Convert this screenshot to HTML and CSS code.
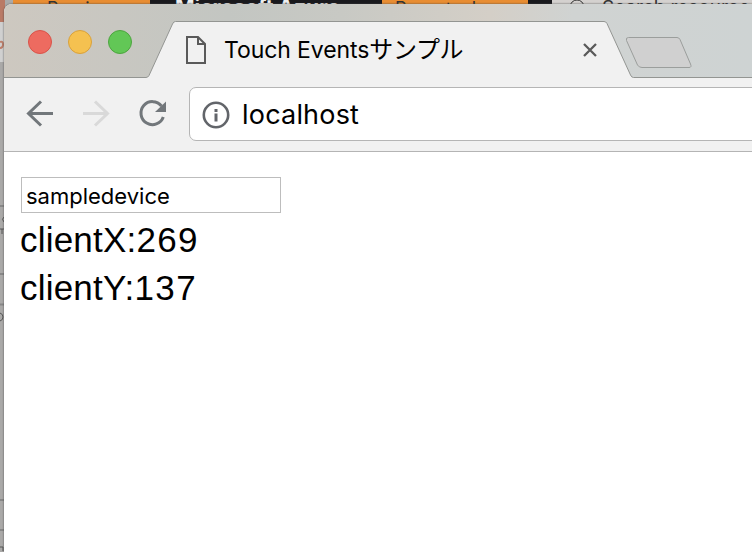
FILE: index.html
```html
<!DOCTYPE html>
<html lang="ja">
<head>
<meta charset="utf-8">
<title>Touch Eventsサンプル</title>
<link rel="stylesheet" href="styles.css">
</head>
<body>
<div class="backdrop">
  <div class="back-bar">
    <div class="corner"></div>
    <div class="orange preview"><span>Preview</span></div>
    <div class="black brand"><span>Microsoft Azure</span></div>
    <div class="orange report"><span>Report a bug</span></div>
    <div class="black gap"></div>
    <div class="search"><svg width="16" height="16" viewBox="0 0 16 16"><circle cx="8" cy="7" r="7" fill="none" stroke="#333"/></svg><span>Search resources</span></div>
  </div>
  <svg class="back-edge" width="5" height="552" viewBox="0 0 5 552">
    <path d="M0 0H5V22H0z" fill="#b97a66"/>
    <path d="M0 22H5V62H0z" fill="#d0d0d0"/>
    <path d="M0 42C4 40 4 48 0 48" fill="none" stroke="#bd7e6a" stroke-width="2"/>
    <path d="M0 206H5M0 274H5M0 304.500H5M0 500H5M0 530H5" stroke="#888" stroke-width="2"/>
    <path d="M4 217Q1 219 4 222M0 229h4M2 229v5M0 313q3 1 3 4t-3 4M0 547h3v4" fill="none" stroke="#555"/>
  </svg>
</div>
<main class="window">
  <header class="tabstrip">
    <svg class="tab-shape" width="748" height="74" viewBox="4 4 748 74">
      <path d="M4 78V77.500H146Q148 77.500 149 75.500L172.500 24Q173.500 21.500 175.500 21.500H604Q606 21.500 607 23.500L630.500 75Q631.500 77.500 633.500 77.500H753V79H4z" fill="#f1f1f1" stroke="#939592"/>
      <path d="M628.500 37.500H677Q679 37.500 680 39.500L690.500 64Q692 67.500 689 67.500H642Q639 67.500 637.500 65L626.500 40.500Q625.500 37.500 628.500 37.500z" fill="#d0d0d0" stroke="#9b9e9c"/>
    </svg>
    <div class="lights"><i class="red"></i><i class="yellow"></i><i class="green"></i></div>
    <div class="tab">
      <svg width="22" height="30" viewBox="185 35 22 30"><path d="M187 37H198L205 44V63H187zM198 37V44H205" fill="none" stroke="#5a5a5a" stroke-width="2"/></svg>
      <span class="title">Touch Events<span class="kana">サンプル</span></span>
      <svg class="close" width="16" height="16" viewBox="0 0 16 16"><path d="M2 2L14 14M14 2L2 14" stroke="#5a5a5a" stroke-width="2.300"/></svg>
    </div>
  </header>
  <nav class="toolbar">
    <svg class="nav-icons" width="145" height="30" viewBox="25 99 145 30" fill="none" stroke-width="3">
      <path d="M53 113.500H29M41 101.500L28.500 113.500L41 125.500" stroke="#72777b"/>
      <path d="M83 113.500H107M95 101.500L107.500 113.500L95 125.500" stroke="#d9d9d9"/>
      <path d="M161.500 106A11.500 11.500 0 1 0 163.300 117" stroke="#72777b"/>
      <path d="M166 101.500V112H155z" fill="#72777b"/>
    </svg>
    <div class="address">
      <svg width="28" height="28" viewBox="0 0 28 28"><circle cx="14" cy="14" r="12.200" fill="none" stroke="#62656a" stroke-width="2.600"/><path d="M12.500 8h3v3h-3zM12.500 12.500h3v8h-3z" fill="#62656a"/></svg>
      <span>localhost</span>
    </div>
  </nav>
  <section class="page">
    <input class="device" type="text" value="sampledevice">
    <div class="line">clientX:<span class="num">269</span></div>
    <div class="line">clientY:<span class="num">137</span></div>
  </section>
</main>
</body>
</html>
```
FILE: styles.css
```css
* { box-sizing: border-box; }
body { margin: 0; width: 752px; height: 552px; overflow: hidden; position: relative; background: #aaa; font-family: Inter, "Noto Sans CJK JP", sans-serif; color: #000; }
.backdrop { position: absolute; inset: 0; overflow: hidden; background: #aaa9a8; }
.back-bar { display: flex; height: 24px; font-size: 18px; line-height: 17px; white-space: nowrap; }
.back-bar > div { flex: none; }
.corner { width: 13px; background: #aaa; }
.orange { background: #e88d32; color: #333; }
.black { background: #19191d; color: #eee; }
.preview { width: 137px; padding-left: 34px; }
.brand { width: 232px; padding: 0 0 0 25px; font-size: 21px; font-weight: 700; line-height: 16px; }
.report { width: 146px; padding-left: 13px; }
.gap { width: 24px; }
.search { width: 200px; display: flex; gap: 17px; padding-left: 17px; background: #d4d1cf; color: #333; font-size: 19px; line-height: 16px; }
.search svg { flex: none; }
.back-edge { position: absolute; left: 0; top: 0; }
.window { position: absolute; left: 4px; top: 4px; width: 748px; height: 548px; overflow: hidden; border-radius: 8px 0 0 0; background: #fff; box-shadow: 0 0 2px #444; }
.tabstrip { position: relative; height: 74px; display: flex; background: linear-gradient(90deg, #cdc8c0 0, #c3c6c2 30%, #c8c9c4 45%, #d4cfc7 65%, #d0d3d2 76%, #ced3d3 100%); }
.tab-shape { position: absolute; left: 0; top: 0; }
.lights { position: relative; width: 181px; display: flex; gap: 16px; padding: 26px 0 0 24px; }
.lights i { width: 24px; height: 24px; border-radius: 50%; border: 1px solid; }
.lights .red { background: #ed6b60; border-color: #d95349; }
.lights .yellow { background: #f5c150; border-color: #d9a13b; }
.lights .green { background: #62c756; border-color: #4da53f; }
.tab { position: relative; width: 420px; display: flex; align-items: center; padding-top: 17px; }
.title { margin-left: 17px; font-size: 23px; line-height: 32px; letter-spacing: -.1px; white-space: nowrap; }
.kana { font-size: 24px; letter-spacing: -.3px; line-height: 24px; }
.close { margin-left: auto; margin-right: 7px; }
.toolbar { height: 74px; display: flex; align-items: flex-start; background: #f1f1f1; border-bottom: 1px solid #b4b4b4; }
.nav-icons { flex: none; margin: 21px 0 0 21px; }
.address { flex: none; margin-left: 19px; width: 580px; height: 54px; display: flex; align-items: center; gap: 12px; padding: 2px 0 0 12px; margin-top: 9px; background: #fff; border: 1px solid #b5b5b5; border-radius: 7px; font-size: 27px; letter-spacing: .2px; line-height: 34px; }
.page { height: 400px; padding: 25px 0 0 17px; }
.device { display: block; width: 260px; height: 36px; margin: 0; padding: 1px 4px 0; border: 1px solid #bdbdbd; border-radius: 0; background: #fff; color: #000; font: 22px Inter, sans-serif; }
.line { margin-left: -1px; height: 48px; line-height: 54px; font-family: "Liberation Sans", Arial, sans-serif; font-size: 35px; letter-spacing: .2px; white-space: nowrap; }
.num { letter-spacing: 1.4px; }
```
